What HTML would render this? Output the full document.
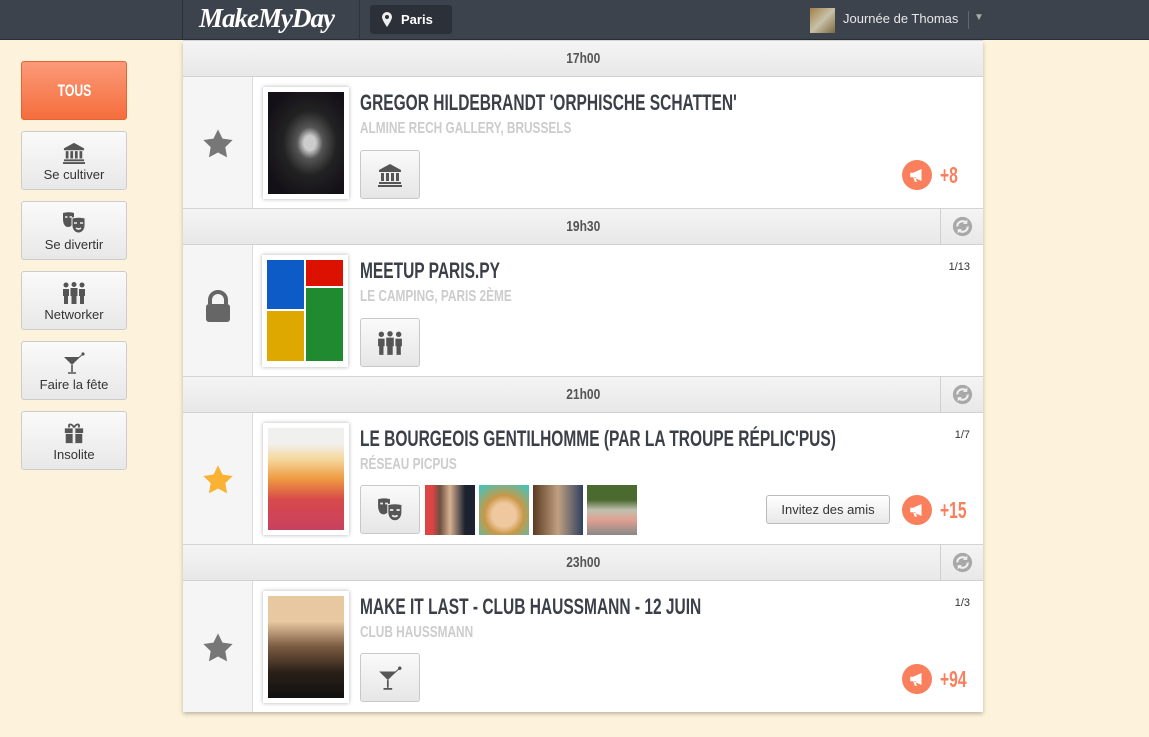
<!DOCTYPE html>
<html><head><meta charset="utf-8"><style>
*{margin:0;padding:0;box-sizing:border-box}
body{width:1149px;height:737px;background:#fdf3dc;font-family:"Liberation Sans",sans-serif;position:relative;overflow:hidden}
.abs{position:absolute}
#hdr{left:0;top:0;width:1149px;height:40px;background:#3d434d;border-bottom:1px solid #2a2e35}
.logo{left:199px;top:3px;font-family:"Liberation Serif",serif;font-style:italic;font-weight:bold;font-size:27px;color:#fff;letter-spacing:-1px}
.city{left:370px;top:5px;width:82px;height:29px;background:#2c3038;border-radius:3px;color:#fff;font-size:13px;font-weight:bold;line-height:29px;padding-left:31px}
.user{left:843px;top:11px;color:#e8e8e8;font-size:13px}
.card{left:183px;top:41px;width:800px;height:671px;background:#fff;box-shadow:0 2px 4px rgba(0,0,0,.25)}
.bar{left:183px;width:800px;height:37px;background:linear-gradient(#f4f4f4,#e8e8e8);border-top:1px solid #d4d4d4;border-bottom:1px solid #d0d0d0;text-align:center;line-height:36px;font-size:15px;color:#555;font-weight:bold}
.bar span{display:inline-block;transform:scaleX(.8)}
.ref{position:absolute;right:0;top:0;width:43px;height:35px;border-left:1px solid #d0d0d0}
.lcol{left:183px;width:70px;background:#f5f5f5;border-right:1px solid #ddd}
.frame{width:86px;height:112px;background:#fff;box-shadow:0 0 4px rgba(0,0,0,.3);padding:5px}
.frame>div{width:100%;height:100%}
.title{left:360px;font-weight:bold;font-size:22px;color:#3b3f48;transform:scaleX(.705);transform-origin:0 0;white-space:nowrap}
.sub{left:360px;font-weight:bold;font-size:16px;color:#ccc;transform:scaleX(.74);transform-origin:0 0;white-space:nowrap}
.cat{left:360px;width:60px;height:49px;border:1px solid #c8c8c8;border-radius:3px;background:linear-gradient(#fafafa,#e6e6e6);display:flex;align-items:center;justify-content:center}
.mega{width:30px;height:30px;border-radius:50%;background:#fa7f5c;display:flex;align-items:center;justify-content:center}
.cnt{font-weight:bold;font-size:23px;color:#fa7f5c;transform:scaleX(.68);transform-origin:0 0}
.frac{left:940px;font-size:11px;color:#333;width:30px;text-align:right}
.sb{left:21px;width:106px;height:59px;border:1px solid #ccc;border-radius:3px;background:linear-gradient(#fafafa,#e8e8e8);text-align:center;font-size:13px;color:#333}
.sb svg{display:block;margin:10px auto 3px}
.av{top:485px;width:50px;height:50px}
</style></head><body>
<svg width="0" height="0" style="position:absolute">
<defs>
<symbol id="bank" viewBox="0 0 24 24"><path d="M12 1L1 7v2h22V7z M3 10h3v8H3z M8 10h3v8H8z M13 10h3v8h-3z M18 10h3v8h-3z M1 19h22v2H1z M0 22h24v2H0z" fill="#555"/></symbol>
<symbol id="mask" viewBox="0 0 24 22"><path d="M1 1c4-1 8-1 11 0v6c0 5-3 8-6 8S1 12 1 7z" fill="#555"/><path d="M10 6c4-1 9-1 13 0v7c0 5-3 8-6.5 8S10 18 10 13z" fill="#555" stroke="#eee" stroke-width="1"/><path d="M12 11h3M18 11h3M14 16q2.5 2 5 0" stroke="#eee" stroke-width="1.6" fill="none"/><path d="M3 5h2.5M7.5 5h2.5" stroke="#eee" stroke-width="1.6"/></symbol>
<symbol id="ppl" viewBox="0 0 24 22"><circle cx="4" cy="3" r="2.5" fill="#555"/><circle cx="12" cy="2.5" r="2.5" fill="#555"/><circle cx="20" cy="3" r="2.5" fill="#555"/><path d="M1 7h6v7h-1v8H2v-8H1z M8.5 6h7v8h-1v8h-5v-8h-1z M17 7h6v7h-1v8h-4v-8h-1z" fill="#555"/></symbol>
<symbol id="cock" viewBox="0 0 24 22"><path d="M2 5h16l-8 8z" fill="#555"/><path d="M10 13v7M6 21h8" stroke="#555" stroke-width="1.6"/><path d="M14 8l7-6" stroke="#555" stroke-width="1"/><circle cx="21" cy="2" r="1.6" fill="#555"/></symbol>
<symbol id="gift" viewBox="0 0 24 24"><path d="M2 7h20v5H2z M3 13h18v10H3z" fill="#555"/><path d="M10.5 7h3v16h-3z" fill="#eee"/><path d="M12 6C9 1 5 2 7 6M12 6c3-5 7-4 5 0" stroke="#555" stroke-width="2" fill="none"/></symbol>
<symbol id="star" viewBox="0 0 24 24"><path d="M12 1l3.4 7 7.6 1-5.5 5.3 1.3 7.7L12 18.4 5.2 22l1.3-7.7L1 9l7.6-1z"/></symbol>
<symbol id="mg" viewBox="0 0 24 24"><path d="M3 9h4l11-5v16L7 15H3z M7 15l2 6h3l-2-6z" fill="#fff"/></symbol>
<symbol id="rf" viewBox="0 0 24 24"><circle cx="12" cy="12" r="11" fill="#a8a8a8"/><path d="M6 12a6 6 0 0 1 10-4.5M18 12a6 6 0 0 1-10 4.5" stroke="#f0f0f0" stroke-width="2.4" fill="none"/><path d="M17.5 4v5h-5zM6.5 20v-5h5z" fill="#f0f0f0"/></symbol>
</defs></svg>

<div id="hdr" class="abs"></div>
<div class="abs" style="left:182px;top:0;width:1px;height:40px;background:#2a2e35"></div>
<div class="abs" style="left:359px;top:0;width:1px;height:40px;background:#2e323a"></div>
<div class="abs logo">MakeMyDay</div>
<div class="abs city">Paris</div>
<svg class="abs" style="left:382px;top:12px" width="10" height="15" viewBox="0 0 10 15"><path d="M5 0a5 5 0 0 1 5 5c0 3-5 10-5 10S0 8 0 5a5 5 0 0 1 5-5z" fill="#eee"/><circle cx="5" cy="5" r="2" fill="#2c3038"/></svg>
<div class="abs" style="left:810px;top:8px;width:25px;height:25px;background:linear-gradient(135deg,#a08048,#c8c0a8 50%,#7a6a40)"></div>
<div class="abs user">Journée de Thomas</div>
<div class="abs" style="left:968px;top:11px;width:1px;height:18px;background:#666"></div>
<div class="abs" style="left:974px;top:12px;color:#aaa;font-size:10px">▼</div>

<div class="abs" style="left:21px;top:61px;width:106px;height:59px;border-radius:3px;background:linear-gradient(#fb9a78,#f56d3c);border:1px solid #e26535;color:#fff;font-weight:bold;font-size:17px;text-align:center;line-height:57px"><span style="display:inline-block;transform:scaleX(.72)">TOUS</span></div>
<div class="abs sb" style="top:131px"><svg width="24" height="22"><use href="#bank"/></svg>Se cultiver</div>
<div class="abs sb" style="top:201px"><svg width="24" height="22"><use href="#mask"/></svg>Se divertir</div>
<div class="abs sb" style="top:271px"><svg width="24" height="22"><use href="#ppl"/></svg>Networker</div>
<div class="abs sb" style="top:341px"><svg width="24" height="22"><use href="#cock"/></svg>Faire la fête</div>
<div class="abs sb" style="top:411px"><svg width="24" height="22"><use href="#gift"/></svg>Insolite</div>

<div class="abs card"></div>

<div class="abs bar" style="top:40px"><span>17h00</span></div>
<div class="abs lcol" style="top:77px;height:131px"></div>
<svg class="abs" style="left:202px;top:128px" width="32" height="32" fill="#777"><use href="#star"/></svg>
<div class="abs frame" style="left:263px;top:87px"><div style="background:radial-gradient(ellipse at 55% 50%,#ccc 0 10%,#555 22%,#222 45%,#141018 80%)"></div></div>
<div class="abs title" style="top:90px">GREGOR HILDEBRANDT 'ORPHISCHE SCHATTEN'</div>
<div class="abs sub" style="top:120px">ALMINE RECH GALLERY, BRUSSELS</div>
<div class="abs cat" style="top:150px"><svg width="26" height="24"><use href="#bank"/></svg></div>
<div class="abs mega" style="left:902px;top:160px"><svg width="18" height="18"><use href="#mg"/></svg></div>
<div class="abs cnt" style="left:940px;top:162px">+8</div>

<div class="abs bar" style="top:208px"><span>19h30</span><div class="ref"><svg style="margin-top:7px" width="21" height="21"><use href="#rf"/></svg></div></div>
<div class="abs lcol" style="top:245px;height:131px"></div>
<svg class="abs" style="left:203px;top:290px" width="30" height="34" viewBox="0 0 30 34"><path d="M7 14V10a8 8 0 0 1 16 0v4" stroke="#666" stroke-width="4" fill="none"/><rect x="3" y="14" width="24" height="18" rx="3" fill="#666"/></svg>
<div class="abs frame" style="left:262px;top:255px"><div style="position:relative;background:#fff">
<div class="abs" style="left:0;top:0;width:37px;height:49px;background:#0d5bc6"></div>
<div class="abs" style="left:39px;top:0;width:37px;height:26px;background:#dd1100"></div>
<div class="abs" style="left:39px;top:28px;width:37px;height:73px;background:#1f8a30"></div>
<div class="abs" style="left:0;top:51px;width:37px;height:50px;background:#dea800"></div></div></div>
<div class="abs title" style="top:258px">MEETUP PARIS.PY</div>
<div class="abs sub" style="top:288px">LE CAMPING, PARIS 2ÈME</div>
<div class="abs cat" style="top:318px"><svg width="26" height="24"><use href="#ppl"/></svg></div>
<div class="abs frac" style="top:261px">1/13</div>

<div class="abs bar" style="top:376px"><span>21h00</span><div class="ref"><svg style="margin-top:7px" width="21" height="21"><use href="#rf"/></svg></div></div>
<div class="abs lcol" style="top:413px;height:131px"></div>
<svg class="abs" style="left:202px;top:464px" width="32" height="32" fill="#f9b233"><use href="#star"/></svg>
<div class="abs frame" style="left:263px;top:423px"><div style="background:linear-gradient(#f0f0ee 0 15%,#f5d9a0 30%,#ee9a40 50%,#d84a4a 70%,#c84060 100%)"></div></div>
<div class="abs title" style="top:426px">LE BOURGEOIS GENTILHOMME (PAR LA TROUPE RÉPLIC'PUS)</div>
<div class="abs sub" style="top:456px">RÉSEAU PICPUS</div>
<div class="abs cat" style="top:485px"><svg width="26" height="24"><use href="#mask"/></svg></div>
<div class="abs av" style="left:425px;background:linear-gradient(90deg,#d44 0 15%,#6b5040 30%,#d8b090 50%,#1c2230 80%)"></div>
<div class="abs av" style="left:479px;background:radial-gradient(circle at 50% 60%,#f0c8a0 0 30%,#c89848 50%,#50c0b0 90%)"></div>
<div class="abs av" style="left:533px;background:linear-gradient(90deg,#5a3a20,#c0a080 50%,#304060)"></div>
<div class="abs av" style="left:587px;background:linear-gradient(#4a6a30 0 30%,#c0c0b0 50%,#e0a090 70%,#888)"></div>
<div class="abs" style="left:766px;top:495px;width:124px;height:29px;border:1px solid #bbb;border-radius:3px;background:linear-gradient(#fff,#e8e8e8);font-size:13px;color:#333;text-align:center;line-height:27px">Invitez des amis</div>
<div class="abs mega" style="left:902px;top:495px"><svg width="18" height="18"><use href="#mg"/></svg></div>
<div class="abs cnt" style="left:940px;top:497px">+15</div>
<div class="abs frac" style="top:429px">1/7</div>

<div class="abs bar" style="top:544px"><span>23h00</span><div class="ref"><svg style="margin-top:7px" width="21" height="21"><use href="#rf"/></svg></div></div>
<div class="abs lcol" style="top:581px;height:131px"></div>
<svg class="abs" style="left:202px;top:632px" width="32" height="32" fill="#777"><use href="#star"/></svg>
<div class="abs frame" style="left:263px;top:591px"><div style="background:linear-gradient(#e8c8a0 0 25%,#7a5a40 50%,#2a2018 75%,#101010)"></div></div>
<div class="abs title" style="top:594px">MAKE IT LAST - CLUB HAUSSMANN - 12 JUIN</div>
<div class="abs sub" style="top:624px">CLUB HAUSSMANN</div>
<div class="abs cat" style="top:653px"><svg width="26" height="24"><use href="#cock"/></svg></div>
<div class="abs mega" style="left:902px;top:664px"><svg width="18" height="18"><use href="#mg"/></svg></div>
<div class="abs cnt" style="left:940px;top:666px">+94</div>
<div class="abs frac" style="top:597px">1/3</div>
</body></html>
